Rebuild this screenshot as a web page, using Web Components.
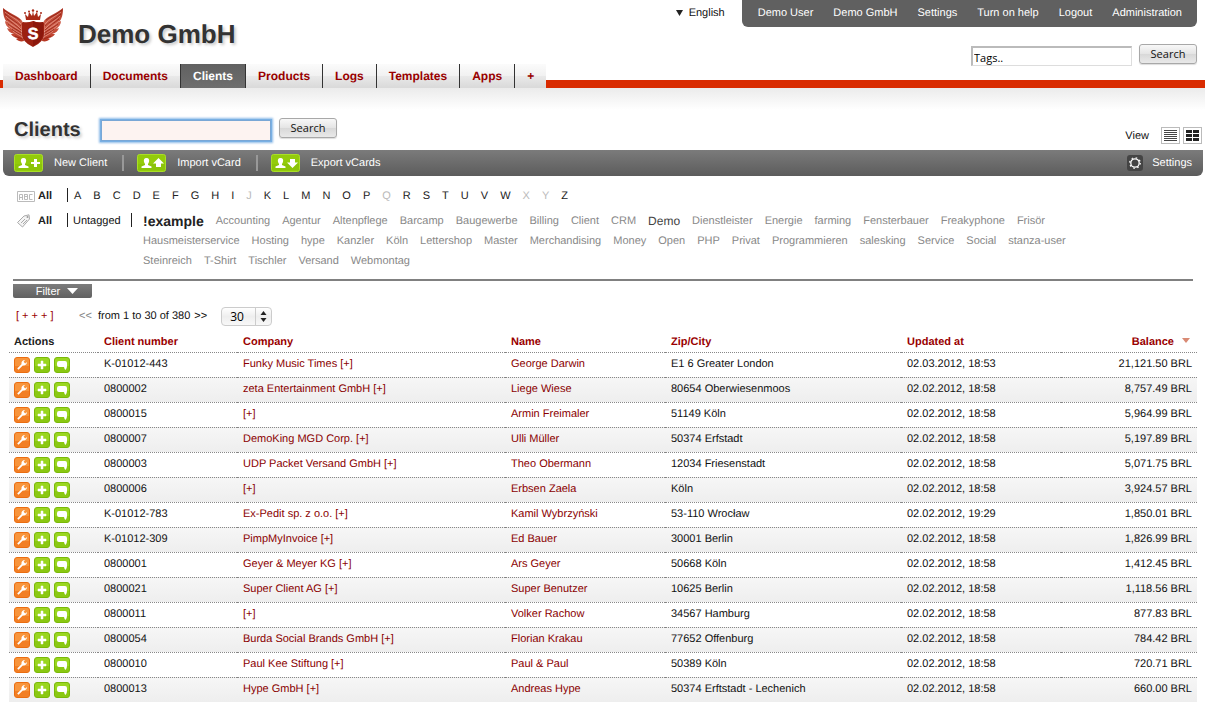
<!DOCTYPE html>
<html lang="en">
<head>
<meta charset="utf-8">
<title>Clients - Demo GmbH</title>
<style>
  body {
    margin: 0;
    background: #fff;
    color: #222;
    font-family: "Liberation Sans", Arial, Helvetica, sans-serif;
    font-size: 11px;
    line-height: 20px;
    text-rendering: geometricPrecision;
  }
</style>
</head>
<body>
<clients-app></clients-app>

<script>
const define = (name, html, setup) => {
  const template = document.createElement('template');
  template.innerHTML = '<style>*{box-sizing:border-box}a{color:inherit;text-decoration:none}</style>' + html;
  customElements.define(name, class extends HTMLElement {
    constructor() {
      super();
      this.attachShadow({ mode: 'open' }).append(template.content.cloneNode(true));
    }
    connectedCallback() {
      if (setup && !this.ready) { this.ready = true; setup(this, this.shadowRoot); }
    }
  });
};

/* Winged crest */
define('brand-logo', `
<style>:host{display:block;width:62px;height:40px} svg{display:block}</style>
<svg width="62" height="40" viewBox="0 0 62 40" aria-hidden="true">
  <defs>
    <linearGradient id="w" x1="0" y1="0" x2="0" y2="1"><stop offset="0" stop-color="#a92c1b"/><stop offset=".5" stop-color="#cf5f4b"/><stop offset="1" stop-color="#b5341f"/></linearGradient>
    <g id="wing">
      <path fill="url(#w)" d="M0 0C3 3 8 5 13 8C17 10 20 13 21 17V33C18 34 15 33 13 31L15 30C12 30 9 28 8 26L11 26C7 25 5 23 4 20L7 21C4 19 2 16 2 13L4 14C1 11 0 6 0 0Z"/>
      <path fill="none" stroke="#e9a090" stroke-width=".7" d="M2 4C8 9 14 11 18 16M3 8C8 13 14 16 18 21M4 13C8 17 14 20 19 24M6 18C10 22 15 24 19 27M10 23C13 26 17 27 20 30"/>
      <path fill="none" stroke="#8f1d10" stroke-width=".7" d="M1 2C6 7 12 8 17 12M2 6C7 11 14 14 18 18M4 11C9 15 14 18 18 22M5 16C10 20 15 22 19 25M9 21C12 24 17 26 20 28M12 28C15 30 18 30 20 31"/>
    </g>
  </defs>
  <use href="#wing"/><use href="#wing" transform="translate(60 0) scale(-1 1)"/>
  <path fill="#fff" d="M19 12H41L42 26Q41 35 30 39Q19 35 18 26Z" opacity=".25"/>
  <path fill="#9c2011" d="M20 14Q25 15 30 13Q35 15 40 14Q42 15 41 18V26Q41 34 30 39Q19 34 19 26V18Q18 15 20 14Z"/>
  <path fill="#8b170c" d="M30 13Q35 16 40 14V26Q40 33 30 38Z"/>
  <path fill="#a92a18" d="M22 6L25 9L26 4L29 8L30 3L31 8L34 4L35 9L38 6L37 12H23Z"/>
  <g fill="#a92a18"><circle cx="22" cy="5" r="1"/><circle cx="26" cy="3.500" r="1"/><circle cx="30" cy="2.500" r="1.200"/><circle cx="34" cy="3.500" r="1"/><circle cx="38" cy="5" r="1"/></g>
  <text x="30" y="31" text-anchor="middle" font-size="16" font-weight="bold" fill="#fff" stroke="#fff" stroke-width=".6">S</text>
</svg>`);

define('push-button', `
<style>
  :host{display:inline-block}
  button{display:block;width:58px;height:20px;padding:0;border:1px solid #a8a8a8;border-radius:3px;
    background:linear-gradient(#f8f8f8,#e4e4e4 50%,#d8d8d8 51%,#e9e9e9);color:#111;
    font:11px/18px "Open Sans","Noto Sans",sans-serif;box-shadow:0 1px 1px #ddd}
</style>
<button type="button"><slot></slot></button>`);

define('user-menu', `
<style>
  :host{display:flex;font-size:11px;line-height:20px}
  .language{display:flex;align-items:center;gap:6px;height:25px;padding-right:17px;color:#111}
  nav{display:flex;gap:20px;height:27px;padding:3px 15px 0 16px;background:#606060;border-radius:0 0 6px 6px;color:#fff}
</style>
<a class="language" href="#language"><svg width="7" height="6" viewBox="0 0 7 6" aria-hidden="true"><path d="M0 0H7L3.500 6Z" fill="#222"/></svg>English</a>
<nav aria-label="Account">
  <a href="#user">Demo User</a><a href="#company">Demo GmbH</a><a href="#settings">Settings</a>
  <a href="#help">Turn on help</a><a href="#logout">Logout</a><a href="#administration">Administration</a>
</nav>`);

define('page-header', `
<style>
  :host{display:flex;justify-content:space-between;height:64px;padding:0 8px 0 3px}
  .brand{display:flex;gap:13px;padding-top:8px}
  .name{margin:0;font-size:26px;line-height:52px;font-weight:bold;color:#333;text-shadow:2px 2px 3px #ccc}
  .side{display:flex;flex-direction:column;align-items:flex-end;gap:17px}
  form{display:flex;gap:7px}
  input{width:161px;height:20px;margin-top:2px;padding:1px 1px 0;border:1px solid #ddd;border-top:2px solid #bbb;border-left:2px solid #bbb;
    background:#fff;color:#000;font:11px/16px "Open Sans","Noto Sans",sans-serif}
</style>
<a class="brand" href="#home"><brand-logo></brand-logo><span class="name">Demo GmbH</span></a>
<div class="side">
  <user-menu></user-menu>
  <form><input type="text" aria-label="Tags" value="Tags.."><push-button>Search</push-button></form>
</div>`);

define('nav-tab', `
<style>
  :host{display:block;border-right:1px solid #333}
  :host(:last-child){border-right:0}
  a{display:block;height:24px;padding:0 12px;font-size:12px;line-height:24px;font-weight:bold;color:#900;
    background:linear-gradient(#fbfbfb,#f1f1f1 50%,#e9e9e9 52%,#d9d9d9)}
  :host([active]) a{color:#fff;background:linear-gradient(#616161,#6e6e6e)}
</style>
<a href="#tab"><slot></slot></a>`);

define('main-nav', `
<style>
  :host{display:block}
  nav{display:flex;height:24px;padding-left:3px;background:linear-gradient(#d92b00,#d92b00) bottom / 100% 8px no-repeat}
</style>
<nav aria-label="Main"><slot></slot></nav>`);

define('title-bar', `
<style>
  :host{display:flex;align-items:flex-start;height:62px;padding:29px 3px 0 14px;background:linear-gradient(#ebebeb,#fff 22px)}
  h1{margin:0;width:87px;font-size:20px;line-height:26px;color:#333;text-shadow:2px 2px 3px #ccc}
  input{width:170px;height:21px;margin:3px 8px 0 0;padding:0 3px;border:1px solid #79a7d6;outline:0;background:#fdf3f1;
    box-shadow:0 0 0 1px #79b0e4,0 0 2px 2px #8fbce8;font:11px "Open Sans",sans-serif}
  push-button{margin-top:1px}
  .view{display:flex;gap:3px;margin-left:auto;padding-top:10px;line-height:18px;color:#111}
  .view span{padding:0 9px 0 0}
  .view a{display:block;height:17px}
  svg{display:block}
</style>
<h1>Clients</h1>
<input type="text" aria-label="Search clients">
<push-button>Search</push-button>
<div class="view"><span>View</span>
  <a href="#list" aria-label="List view"><svg width="19" height="17"><rect x=".5" y=".5" width="18" height="16" fill="#fff" stroke="#bbb"/><path d="M3 3.500H16M3 5.500H16M3 7.500H16M3 9.500H16M3 11.500H16M3 13.500H16" stroke="#444"/></svg></a>
  <a href="#grid" aria-label="Grid view"><svg width="19" height="17"><rect x=".5" y=".5" width="18" height="16" fill="#fff" stroke="#bbb"/><path d="M3 4.500H9M10 4.500H16M3 8.500H9M10 8.500H16M3 12.500H9M10 12.500H16" stroke="#222" stroke-width="3"/></svg></a>
</div>`);

define('tool-action', `
<style>
  :host{display:block}
  :host(:not(:first-child)) a::before{content:"";width:2px;height:16px;margin:0 13px 0 15px;background:#999}
  a{display:flex;align-items:center;color:#fff}
  svg{margin-right:11px}
</style>
<a href="#action">
  <svg width="29" height="18" viewBox="0 0 29 18" aria-hidden="true">
    <rect x=".5" y=".5" width="28" height="17" rx="2" fill="#93cb0b" stroke="#a9df26"/>
    <path d="M1 10H28V16H1Z" fill="#84bd08" opacity=".5"/>
    <path fill="#fff" d="M9.500 4C12 4 12.500 6 12 8L11 10V11L14.500 12.500V14H4.500V12.500L8 11V10L7 8C6.500 6 7 4 9.500 4Z"/>
    <path id="mark" fill="#fff"/>
  </svg><slot></slot>
</a>`, (host, root) => {
  root.getElementById('mark').setAttribute('d', {
    add: 'M20 5H23V8H26V10H23V13H20V10H17V8H20Z',
    up: 'M21.500 4L27 9.500H24V13H19V9.500H16Z',
    down: 'M21.500 14L27 8.500H24V5H19V8.500H16Z'
  }[host.getAttribute('icon')]);
});

define('tool-bar', `
<style>
  :host{display:flex;align-items:center;height:26px;margin:0 2px 0 3px;padding:0 11px;background:linear-gradient(#7b7b7b,#5c5c5c);
    border-radius:0 0 6px 6px;color:#fff;line-height:18px}
  .settings{display:flex;align-items:center;gap:9px;margin-left:auto}
</style>
<slot></slot>
<a class="settings" href="#view-settings"><svg width="16" height="16" viewBox="0 0 16 16" aria-hidden="true"><rect width="16" height="16" rx="3" fill="#444"/><circle cx="8" cy="8" r="5.300" fill="none" stroke="#fff" stroke-width="1.200" stroke-dasharray="1.600 2.563"/><circle cx="8" cy="8" r="4.200" fill="none" stroke="#fff" stroke-width="1.300"/></svg>Settings</a>`);

define('filter-panel', `
<style>
  :host{display:block;padding:10px 12px 0 17px}
  .row{display:grid;grid-template-columns:50px 1fr;margin-bottom:5px}
  .tagged{grid-template-columns:50px 64px 1fr;margin-bottom:0}
  .all{display:flex;align-items:center;gap:3px;height:20px;font-weight:bold}
  .all svg{flex:none}
  .bar{position:relative;padding-left:6px}
  .bar::before{content:"";position:absolute;left:0;top:2px;width:1px;height:14px;background:#222}
  .letters{display:flex;gap:12px;padding-left:7px}
  .off{color:#bbb}
  .cloud{display:flex;flex-wrap:wrap;column-gap:12px;margin-right:90px;padding-left:12px;color:#888}
  .big{font-size:14px;font-weight:bold;color:#222}
  .mid{font-size:12px;color:#444}
  .muted{color:#111}
</style>
<div class="row">
  <a class="all" href="#all"><svg width="18" height="11" viewBox="0 0 18 11" aria-hidden="true"><path fill="#fff" stroke="#bbb" d="M.5 .5H17.500V10.500H.5Z"/><path fill="none" stroke="#bbb" d="M2.500 9V3.500H5.500V9M2.500 6.500H5.500M7.500 3V8.500H10.500V3.500H7M7.500 5.500H10.500M15.500 3.500H12.500V8.500H15.500"/></svg>All</a>
  <div class="bar letters"></div>
</div>
<div class="row tagged">
  <a class="all" href="#all-tags"><svg width="18" height="14" viewBox="0 0 18 14" aria-hidden="true"><path fill="#f4f4f4" stroke="#aaa" d="M.5 8.500L7 2L12 .8L12.500 5L5.500 13Z"/><path fill="none" stroke="#aaa" d="M4 9L8 5M6 10L10 6"/><circle cx="10.500" cy="3" r="1" fill="#999"/></svg>All</a>
  <div class="bar"><a class="muted" href="#untagged">Untagged</a></div>
  <div class="bar cloud"></div>
</div>`, (host, root) => {
  root.querySelector('.letters').innerHTML = [...'ABCDEFGHIJKLMNOPQRSTUVWXYZ']
    .map(c => 'JQXY'.includes(c) ? `<span class="off">${c}</span>` : `<a href="#${c}">${c}</a>`).join('');
  const tags = ['!example', 'Accounting', 'Agentur', 'Altenpflege', 'Barcamp', 'Baugewerbe', 'Billing', 'Client', 'CRM', 'Demo',
    'Dienstleister', 'Energie', 'farming', 'Fensterbauer', 'Freakyphone', 'Frisör', 'Hausmeisterservice', 'Hosting', 'hype',
    'Kanzler', 'Köln', 'Lettershop', 'Master', 'Merchandising', 'Money', 'Open', 'PHP', 'Privat', 'Programmieren', 'salesking',
    'Service', 'Social', 'stanza-user', 'Steinreich', 'T-Shirt', 'Tischler', 'Versand', 'Webmontag'];
  const size = { '!example': 'big', 'Demo': 'mid' };
  root.querySelector('.cloud').innerHTML = tags.map(t => `<a href="#tag" class="${size[t] || ''}">${t}</a>`).join('');
});

define('list-pager', `
<style>
  :host{display:block;margin:8px 12px 0 13px;border-top:2px solid #808080;padding-top:3px}
  .filter{display:flex;align-items:center;justify-content:center;gap:7px;width:79px;height:14px;padding:0 0 0 9px;border:0;color:#fff;
    font:11px/14px "Liberation Sans",Arial,sans-serif;background:linear-gradient(#7c7c7c,#616161);border-radius:0 0 2px 2px}
  .pages{display:flex;align-items:center;height:20px;margin-top:8px;padding-left:3px;color:#111}
  .more{width:63px;color:#900}
  .prev{width:19px;color:#888}
  .next{margin-left:4px}
  label{display:grid;align-items:center;margin-left:14px}
  select,label svg{grid-area:1/1}
  select{appearance:none;width:51px;height:19px;padding:0 8px;border:1px solid #ccc;border-radius:4px;color:#000;
    background:linear-gradient(90deg,transparent 33px,#ccc 33px,#ccc 34px,transparent 34px),linear-gradient(#fff,#eee 50%,#f8f8f8);
    font:12px/17px "Open Sans","Noto Sans",sans-serif}
  label svg{justify-self:end;margin-right:5px;pointer-events:none}
</style>
<button type="button" class="filter">Filter<svg width="11" height="6" aria-hidden="true"><path d="M0 0H11L5.500 6Z" fill="#fff"/></svg></button>
<div class="pages">
  <a class="more" href="#more">[ + + + ]</a>
  <span class="prev">&lt;&lt;</span><span>from 1 to 30 of 380</span><a class="next" href="#next">&gt;&gt;</a>
  <label><select aria-label="Entries per page"><option>30</option><option>50</option><option>100</option></select><svg width="7" height="11" aria-hidden="true"><path d="M3.500 0L6.500 4H.5ZM3.500 11L.5 7H6.500Z" fill="#222"/></svg></label>
</div>`);

define('row-actions', `
<style>
  :host{display:flex;gap:4px}
  a,svg{display:block}
</style>
<a href="#edit" aria-label="Edit"><svg width="16" height="16" viewBox="0 0 16 16"><rect x=".5" y=".5" width="15" height="15" rx="2.500" fill="#f8953c" stroke="#ea6d10"/><path d="M1 9H15V14Q15 15 14 15H2Q1 15 1 14Z" fill="#f0761a" opacity=".7"/><path d="M3.200 11.500L7.500 7.200C7 5 8.500 3 11 3L9.600 4.700L11.200 6.400L13 5C13 7.500 11 9 8.800 8.500L4.500 12.800Z" fill="#fff"/></svg></a>
<a href="#add" aria-label="Add"><svg width="16" height="16" viewBox="0 0 16 16"><rect x=".5" y=".5" width="15" height="15" rx="2.500" fill="#9ad620" stroke="#79b808"/><path d="M1 9H15V14Q15 15 14 15H2Q1 15 1 14Z" fill="#80be08" opacity=".6"/><path d="M7 4H9V7H12V9H9V12H7V9H4V7H7Z" fill="#fff" stroke="#fff" stroke-width=".5"/></svg></a>
<a href="#comment" aria-label="Comment"><svg width="16" height="16" viewBox="0 0 16 16"><rect x=".5" y=".5" width="15" height="15" rx="2.500" fill="#9ad620" stroke="#79b808"/><path d="M1 9H15V14Q15 15 14 15H2Q1 15 1 14Z" fill="#80be08" opacity=".6"/><path d="M5 4H11Q13 4 13 6V9Q13 11.500 11.500 13Q10.500 12.500 10 10H5Q3 10 3 8V6Q3 4 5 4Z" fill="#fff"/></svg></a>`);

define('client-table', `
<style>
  :host{display:block;margin:7px 8px 0 9px}
  table{width:100%;table-layout:fixed;border-collapse:separate;border-spacing:0;line-height:16px;color:#111}
  .c1{width:89px}.c2{width:139px}.c3{width:268px}.c4{width:160px}.c5{width:236px}.c6{width:160px}
  th{height:19px;padding:0 6px 2px;text-align:left;color:#900}
  th:first-child{color:#222}
  td{height:25px;padding:3px 6px 5px;border-top:1px dotted #888;vertical-align:top;white-space:nowrap}
  th:first-child,td:first-child{padding-left:5px}
  td:first-child{padding-top:4px;padding-bottom:4px}
  th:last-child,td:last-child{padding-right:5px;text-align:right}
  tr:nth-child(even) td{background:linear-gradient(#f6f6f6,#eee)}
  td a{color:#8a0000}
  th svg{margin:0 2px 3px 8px;vertical-align:middle}
</style>
<table>
  <colgroup><col class="c1"><col class="c2"><col class="c3"><col class="c4"><col class="c5"><col class="c6"><col></colgroup>
  <thead><tr><th>Actions</th><th><a href="#number">Client number</a></th><th><a href="#company">Company</a></th><th><a href="#name">Name</a></th><th><a href="#city">Zip/City</a></th><th><a href="#updated">Updated at</a></th><th><a href="#balance">Balance<svg width="8" height="5" aria-hidden="true"><path d="M0 0H8L4 5Z" fill="#d98a74"/></svg></a></th></tr></thead>
  <tbody></tbody>
</table>`, (host, root) => {
  const rows = [
    ['K-01012-443', 'Funky Music Times', 'George Darwin', 'E1 6 Greater London', '02.03.2012, 18:53', '21,121.50'],
    ['0800002', 'zeta Entertainment GmbH', 'Liege Wiese', '80654 Oberwiesenmoos', '02.02.2012, 18:58', '8,757.49'],
    ['0800015', '', 'Armin Freimaler', '51149 Köln', '02.02.2012, 18:58', '5,964.99'],
    ['0800007', 'DemoKing MGD Corp.', 'Ulli Müller', '50374 Erfstadt', '02.02.2012, 18:58', '5,197.89'],
    ['0800003', 'UDP Packet Versand GmbH', 'Theo Obermann', '12034 Friesenstadt', '02.02.2012, 18:58', '5,071.75'],
    ['0800006', '', 'Erbsen Zaela', 'Köln', '02.02.2012, 18:58', '3,924.57'],
    ['K-01012-783', 'Ex-Pedit sp. z o.o.', 'Kamil Wybrzyński', '53-110 Wrocław', '02.02.2012, 19:29', '1,850.01'],
    ['K-01012-309', 'PimpMyInvoice', 'Ed Bauer', '30001 Berlin', '02.02.2012, 18:58', '1,826.99'],
    ['0800001', 'Geyer &amp; Meyer KG', 'Ars Geyer', '50668 Köln', '02.02.2012, 18:58', '1,412.45'],
    ['0800021', 'Super Client AG', 'Super Benutzer', '10625 Berlin', '02.02.2012, 18:58', '1,118.56'],
    ['0800011', '', 'Volker Rachow', '34567 Hamburg', '02.02.2012, 18:58', '877.83'],
    ['0800054', 'Burda Social Brands GmbH', 'Florian Krakau', '77652 Offenburg', '02.02.2012, 18:58', '784.42'],
    ['0800010', 'Paul Kee Stiftung', 'Paul &amp; Paul', '50389 Köln', '02.02.2012, 18:58', '720.71'],
    ['0800013', 'Hype GmbH', 'Andreas Hype', '50374 Erftstadt - Lechenich', '02.02.2012, 18:58', '660.00']
  ];
  root.querySelector('tbody').innerHTML = rows.map(([number, company, name, city, updated, balance]) =>
    `<tr><td><row-actions></row-actions></td><td>${number}</td><td><a href="#company">${company} [+]</a></td><td><a href="#client">${name}</a></td><td>${city}</td><td>${updated}</td><td>${balance} BRL</td></tr>`).join('');
});

define('clients-app', `
<style>:host{display:block}</style>
<page-header></page-header>
<main-nav>
  <nav-tab>Dashboard</nav-tab><nav-tab>Documents</nav-tab><nav-tab active>Clients</nav-tab><nav-tab>Products</nav-tab>
  <nav-tab>Logs</nav-tab><nav-tab>Templates</nav-tab><nav-tab>Apps</nav-tab><nav-tab>+</nav-tab>
</main-nav>
<main>
  <title-bar></title-bar>
  <tool-bar>
    <tool-action icon="add">New Client</tool-action><tool-action icon="up">Import vCard</tool-action><tool-action icon="down">Export vCards</tool-action>
  </tool-bar>
  <filter-panel></filter-panel>
  <list-pager></list-pager>
  <client-table></client-table>
</main>`);
</script>
</body>
</html>
